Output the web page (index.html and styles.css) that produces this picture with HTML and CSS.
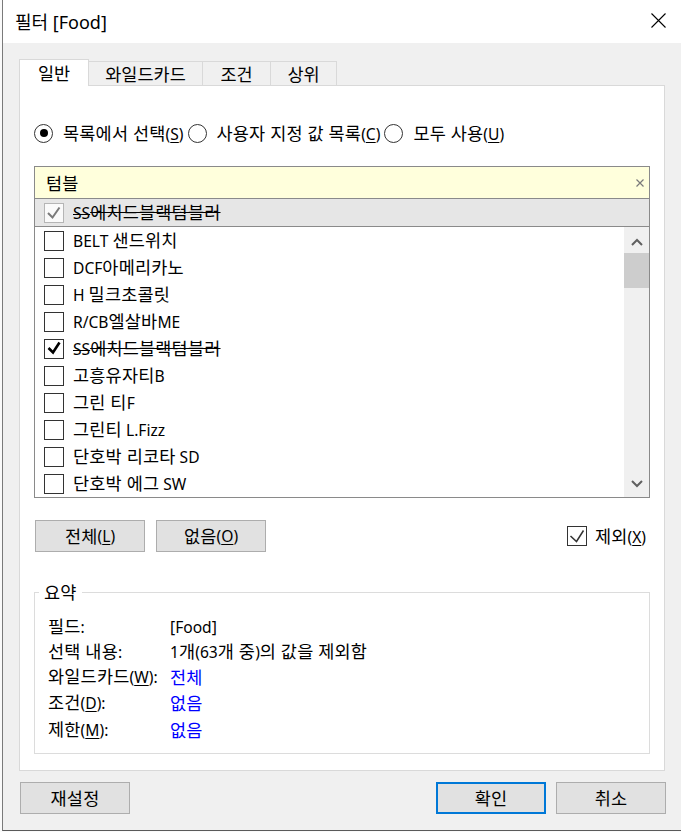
FILE: index.html
```html
<!DOCTYPE html>
<html lang="ko">
<head>
<meta charset="utf-8">
<title>필터 [Food]</title>
<link rel="stylesheet" href="styles.css">
</head>
<body>
<div class="screen">
  <div class="window">
    <div class="titlebar">
      <span class="title">필터 [Food]</span>
      <span class="close">
        <svg width="15" height="15" viewBox="0 0 15 15"><path d="M0.5 0.5 L14.5 14.5 M14.5 0.5 L0.5 14.5" stroke="#000" stroke-width="1.1" fill="none"/></svg>
      </span>
    </div>
    <div class="body">
      <div class="tabs">
        <div class="tab active tab-general">일반</div>
        <div class="tab tab-wild">와일드카드</div>
        <div class="tab tab-cond">조건</div>
        <div class="tab tab-top">상위</div>
      </div>
      <div class="panel">
        <div class="radios">
          <div class="radio"><span class="radio-dot on"></span><span>목록에서 선택<span class="en">(<u>S</u>)</span></span></div>
          <div class="radio"><span class="radio-dot"></span><span>사용자 지정 값 목록<span class="en">(<u>C</u>)</span></span></div>
          <div class="radio"><span class="radio-dot"></span><span>모두 사용<span class="en">(<u>U</u>)</span></span></div>
        </div>

        <div class="listbox">
          <div class="search">
            <span>텀블</span>
            <svg class="clear" width="8" height="8" viewBox="0 0 8 8"><path d="M0.5 0.5 L7.5 7.5 M7.5 0.5 L0.5 7.5" stroke="#7a7a7a" stroke-width="1.2" fill="none"/></svg>
          </div>
          <div class="row pinned">
            <span class="box box-light"><svg width="20" height="20" viewBox="0 0 20 20"><path d="M4 10 L8.5 14.5 L15.5 4.5" stroke="#7a7a7a" stroke-width="2" fill="none"/></svg></span>
            <span class="struck"><span class="en">SS</span>에치드블랙텀블러</span>
          </div>
          <div class="list-wrap">
            <div class="items">
              <div class="row"><span class="box"></span><span><span class="en">BELT </span>샌드위치</span></div>
              <div class="row"><span class="box"></span><span><span class="en">DCF</span>아메리카노</span></div>
              <div class="row"><span class="box"></span><span><span class="en">H </span>밀크초콜릿</span></div>
              <div class="row"><span class="box"></span><span><span class="en">R/CB</span>엘살바<span class="en">ME</span></span></div>
              <div class="row"><span class="box"><svg width="20" height="20" viewBox="0 0 20 20"><path d="M4.5 9 L9 13.5 L15.5 3.5" stroke="#000" stroke-width="2.6" fill="none"/></svg></span><span class="struck"><span class="en">SS</span>에치드블랙텀블러</span></div>
              <div class="row"><span class="box"></span><span>고흥유자티<span class="en">B</span></span></div>
              <div class="row"><span class="box"></span><span>그린 티<span class="en">F</span></span></div>
              <div class="row"><span class="box"></span><span>그린티<span class="en"> L.Fizz</span></span></div>
              <div class="row"><span class="box"></span><span>단호박 리코타<span class="en"> SD</span></span></div>
              <div class="row"><span class="box"></span><span>단호박 에그<span class="en"> SW</span></span></div>
            </div>
            <div class="scrollbar">
              <div class="sb-btn sb-up">
                <svg width="12" height="8" viewBox="0 0 12 8"><path d="M1 7 L6 2 L11 7" stroke="#606060" stroke-width="2" fill="none"/></svg>
              </div>
              <div class="sb-track"><div class="sb-thumb"></div></div>
              <div class="sb-btn sb-down">
                <svg width="12" height="8" viewBox="0 0 12 8"><path d="M1 1 L6 6 L11 1" stroke="#606060" stroke-width="2" fill="none"/></svg>
              </div>
            </div>
          </div>
        </div>

        <div class="actions">
          <button class="btn">전체<span class="en">(<u>L</u>)</span></button>
          <button class="btn">없음<span class="en">(<u>O</u>)</span></button>
          <div class="exclude">
            <span class="box box-dark"><svg width="20" height="20" viewBox="0 0 20 20"><path d="M3.5 10 L9.5 15.5 L16.5 4.5" stroke="#333" stroke-width="1.5" fill="none"/></svg></span>
            <span>제외<span class="en">(<u>X</u>)</span></span>
          </div>
        </div>

        <fieldset class="summary">
          <legend>요약</legend>
          <div class="summary-grid">
            <span>필드<span class="en">:</span></span><span class="en">[Food]</span>
            <span>선택 내용<span class="en">:</span></span><span><span class="en">1</span>개<span class="en">(63</span>개 중<span class="en">)</span>의 값을 제외함</span>
            <span>와일드카드<span class="en">(<u>W</u>):</span></span><span class="link">전체</span>
            <span>조건<span class="en">(<u>D</u>):</span></span><span class="link">없음</span>
            <span>제한<span class="en">(<u>M</u>):</span></span><span class="link">없음</span>
          </div>
        </fieldset>
      </div>
      <div class="footer">
        <button class="btn">재설정</button>
        <button class="btn btn-default">확인</button>
        <button class="btn">취소</button>
      </div>
    </div>
  </div>
</div>
</body>
</html>
```

FILE: styles.css
```css
* { box-sizing: border-box; }
html, body { margin: 0; padding: 0; }
body {
  width: 681px;
  height: 832px;
  overflow: hidden;
  background: #fafafa;
  font-family: "Noto Sans", "Noto Sans CJK KR", sans-serif;
  font-size: 17.5px;
  line-height: 20px;
  letter-spacing: 0.2px;
  color: #000;
}
.en { font-size: 15.6px; letter-spacing: 0; }
u { text-decoration: underline; text-underline-offset: 2px; }

.screen {
  display: flex;
  height: 832px;
  padding-left: 2px;
}
.window {
  width: 679px;
  height: 831px;
  border-left: 1px solid #7a7a7a;
  border-bottom: 1px solid #5a5a5a;
  background: #f0f0f0;
  display: flex;
  flex-direction: column;
}

.titlebar {
  height: 43px;
  flex: none;
  background: #fff;
  display: flex;
  align-items: center;
  justify-content: space-between;
  padding: 0 15px 0 12px;
}
.title { font-size: 18px; line-height: 24px; letter-spacing: 0; }
.close { display: flex; width: 15px; height: 15px; margin-top: -2px; }

.body {
  flex: 1;
  display: flex;
  flex-direction: column;
  padding: 16px;
}

.tabs {
  display: flex;
  align-items: flex-end;
  height: 27px;
  margin-bottom: -1px;
  position: relative;
  z-index: 1;
}
.tab {
  height: 25px;
  margin-left: -1px;
  background: #f0f0f0;
  border: 1px solid #d9d9d9;
  display: flex;
  align-items: center;
  justify-content: center;
  letter-spacing: 0;
}
.tab.active {
  height: 27px;
  margin-left: 0;
  background: #fff;
  border-bottom: none;
  position: relative;
  z-index: 1;
}
.tab-general { width: 70px; }
.tab-wild { width: 115px; }
.tab-cond { width: 69px; }
.tab-top { width: 67px; }

.panel {
  flex: 1;
  background: #fff;
  border: 1px solid #d9d9d9;
  padding: 37px 14px 0 14px;
  display: flex;
  flex-direction: column;
}

.radios {
  display: flex;
  align-items: center;
  gap: 4px;
  height: 20px;
}
.radio { display: flex; align-items: center; gap: 10px; white-space: nowrap; }
.radio-dot {
  width: 19px;
  height: 19px;
  flex: none;
  border: 1px solid #333;
  border-radius: 50%;
  display: flex;
  align-items: center;
  justify-content: center;
}
.radio-dot.on::after {
  content: "";
  width: 8px;
  height: 8px;
  border-radius: 50%;
  background: #000;
}

.listbox {
  margin-top: 23px;
  height: 332px;
  border: 1px solid #8a8a8a;
  display: flex;
  flex-direction: column;
  flex: none;
}
.search {
  height: 32px;
  flex: none;
  background: #ffffdc;
  border-bottom: 1px solid #8a8a8a;
  display: flex;
  align-items: center;
  justify-content: space-between;
  padding: 0 5px 0 11px;
}
.row {
  height: 27px;
  flex: none;
  display: flex;
  align-items: center;
  gap: 9px;
  padding-left: 9px;
  white-space: nowrap;
}
.row.pinned {
  height: 28px;
  background: #e6e6e6;
  border-bottom: 1px solid #8a8a8a;
}
.box {
  width: 20px;
  height: 20px;
  flex: none;
  border: 1px solid #333;
  background: #fff;
  display: flex;
  align-items: center;
  justify-content: center;
  overflow: hidden;
}
.box svg { flex: none; }
.box-light { border-color: #b5b5b5; background: #fafafa; }
.struck { text-decoration: line-through; }

.list-wrap {
  flex: 1;
  display: flex;
  overflow: hidden;
}
.items { flex: 1; overflow: hidden; }
.scrollbar {
  width: 25px;
  flex: none;
  background: #f0f0f0;
  display: flex;
  flex-direction: column;
}
.sb-btn {
  height: 26px;
  flex: none;
  display: flex;
  justify-content: center;
  align-items: center;
}
.sb-up { padding-top: 4px; }
.sb-track { flex: 1; }
.sb-thumb { height: 35px; background: #cdcdcd; }

.actions {
  margin-top: 22px;
  height: 32px;
  display: flex;
  align-items: center;
  padding-left: 1px;
  flex: none;
}
.btn {
  width: 110px;
  height: 32px;
  border: 1px solid #adadad;
  background: #e1e1e1;
  font: inherit;
  letter-spacing: inherit;
  color: #000;
  padding: 0;
  display: flex;
  align-items: center;
  justify-content: center;
  white-space: nowrap;
}
.actions .btn + .btn { margin-left: 11px; }
.exclude {
  margin-left: auto;
  margin-right: 4px;
  display: flex;
  align-items: center;
  gap: 8px;
}
.box-dark { border-color: #333; }

.summary {
  margin: 30px 0 0 0;
  padding: 0;
  border: 1px solid #dcdcdc;
  min-width: 0;
}
.summary legend {
  margin-left: 4px;
  padding: 0 5px;
  line-height: 20px;
}
.summary-grid {
  display: grid;
  grid-template-columns: 122px 1fr;
  grid-template-rows: 25px 25px 25px 27px 27px;
  align-items: center;
  padding: 12px 0 10px 13px;
  white-space: nowrap;
}
.link { color: #0000ff; }

.footer {
  margin: 11px -1px 0 1px;
  height: 32px;
  display: flex;
  flex: none;
}
.footer .btn-default {
  margin-left: auto;
  border: 2px solid #0078d7;
}
.footer .btn-default + .btn { margin-left: 10px; }
```
